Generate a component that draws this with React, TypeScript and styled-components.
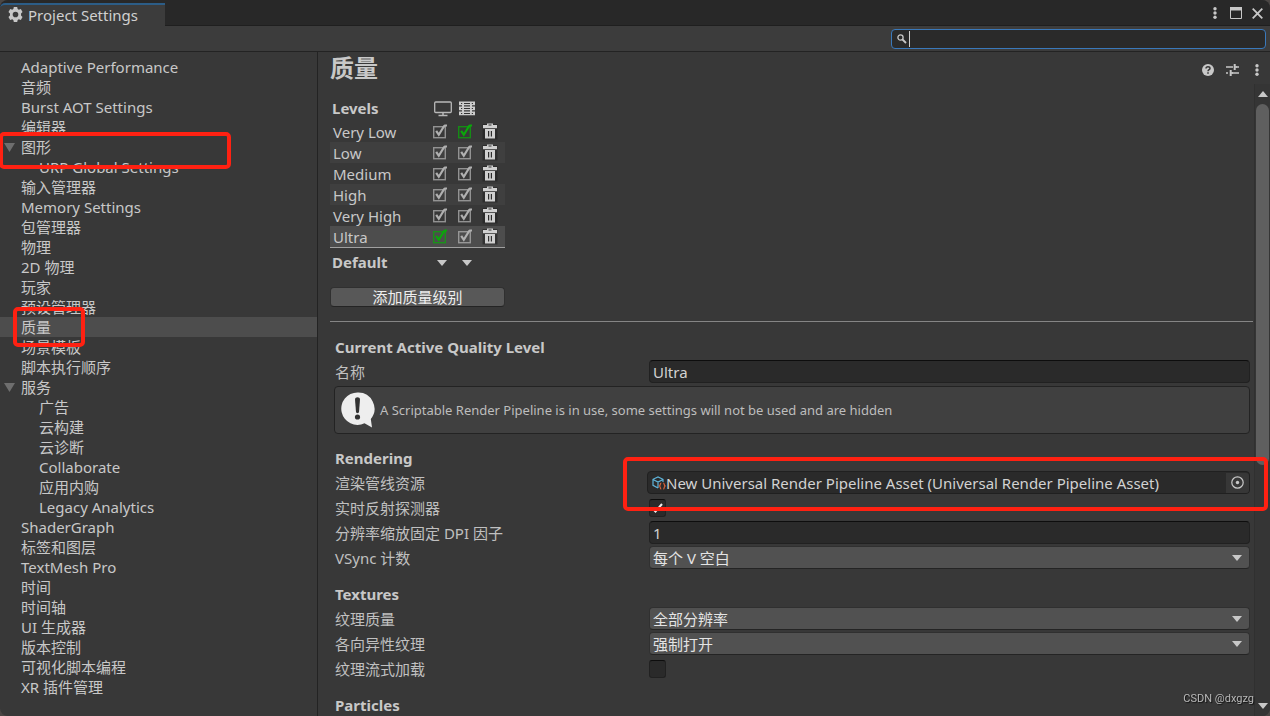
import React, { useState } from 'react';
import styled, { createGlobalStyle } from 'styled-components';

const GlobalStyle = createGlobalStyle`
  * { box-sizing: border-box; }
  html, body, #root { height: 100%; }
  body {
    margin: 0;
    overflow: hidden;
    background: #4a4644;
    color: #c8c8c8;
    font-family: "Noto Sans", "Noto Sans CJK SC", sans-serif;
    font-size: 15px;
    line-height: 20px;
  }
  button, input, select { font: inherit; color: inherit; margin: 0; }
  svg { display: block; }
`;

const Window = styled.div`
  display: flex;
  flex-direction: column;
  height: 100%;
  overflow: hidden;
  background: #383838;
  border-radius: 8px;
`;

const TitleBar = styled.header`
  display: flex;
  justify-content: space-between;
  height: 26px;
  padding-top: 3px;
  background: #282828;
  box-shadow: inset 0 -1px #1f1f1f;
`;

const Tab = styled.button`
  display: flex;
  align-items: center;
  gap: 5px;
  padding: 0 27px 2px 8px;
  border: 0;
  border-top: 2px solid #2c5d87;
  border-radius: 5px 0 0 0;
  background: #3c3c3c;
  line-height: 20px;
  color: #d0d0d0;
`;

const WindowButtons = styled.div`
  display: flex;
  align-items: center;
  padding: 0 4px 3px 0;
`;

const IconButton = styled.button<{ $width: number }>`
  display: grid;
  place-items: center;
  width: ${(p) => p.$width}px;
  height: 20px;
  padding: 0;
  border: 0;
  background: none;
  color: #c8c8c8;
`;

const Toolbar = styled.div`
  display: flex;
  justify-content: flex-end;
  align-items: center;
  height: 26px;
  padding: 0 4px 0 0;
  background: #3c3c3c;
  border-bottom: 1px solid #232323;
`;

const SearchBox = styled.label`
  display: flex;
  align-items: center;
  width: 375px;
  height: 20px;
  padding-left: 5px;
  border: 1px solid #3a79bb;
  border-radius: 4px;
  background: #2a2a2a;
`;

const Caret = styled.span`
  width: 1px;
  height: 16px;
  margin-left: 2px;
  background: #d0d0d0;
`;

const SearchInput = styled.input`
  flex: 1;
  min-width: 0;
  height: 16px;
  padding: 0;
  border: 0;
  outline: 0;
  background: none;
`;

const Body = styled.div`
  display: flex;
  flex: 1;
  min-height: 0;
`;

const Sidebar = styled.nav`
  flex: none;
  width: 318px;
  padding-top: 5px;
  border-right: 1px solid #232323;
`;

const Tree = styled.ul`
  margin: 0;
  padding: 0;
  list-style: none;
`;

const TreeItem = styled.li`
  position: relative;
`;

const TreeLink = styled.a<{ $level: number; $selected?: boolean }>`
  display: flex;
  align-items: center;
  height: 20px;
  padding-left: ${(p) => (p.$level ? 39 : 4)}px;
  background: ${(p) => (p.$selected ? '#4d4d4d' : 'transparent')};
  color: #c8c8c8;
  text-decoration: none;
  white-space: nowrap;
`;

const FoldSlot = styled.span`
  width: 17px;
`;

const Mark = styled.span<{ $top: number; $left: number; $width?: number; $right?: number; $height: number }>`
  position: absolute;
  z-index: 2;
  top: ${(p) => p.$top}px;
  left: ${(p) => p.$left}px;
  right: ${(p) => (p.$right === undefined ? 'auto' : `${p.$right}px`)};
  width: ${(p) => (p.$width ? `${p.$width}px` : 'auto')};
  height: ${(p) => p.$height}px;
  border: 4px solid #ff2112;
  border-radius: 5px;
  pointer-events: none;
`;

const Main = styled.main`
  display: flex;
  flex-direction: column;
  flex: 1;
  min-width: 0;
`;

const PageHeader = styled.div`
  display: flex;
  flex: none;
  justify-content: space-between;
  align-items: center;
  height: 32px;
  padding-left: 12px;
`;

const PageTitle = styled.h1`
  margin: 0;
  font-size: 24px;
  line-height: 32px;
  font-weight: 700;
`;

const HeaderButtons = styled.div`
  display: flex;
  padding-top: 4px;
`;

const ScrollArea = styled.div`
  display: flex;
  flex: 1;
  min-height: 0;
`;

const Content = styled.div`
  flex: 1;
  min-width: 0;
  padding: 14px 1px 0 12px;
`;

const LevelTable = styled.table`
  width: 175px;
  border-collapse: collapse;
  table-layout: fixed;
`;

const NameCol = styled.col`
  width: 98px;
`;

const CheckCol = styled.col`
  width: 25px;
`;

const HeadCell = styled.th<{ $icon?: boolean }>`
  height: 23px;
  padding: ${(p) => (p.$icon ? '0 0 2px 6px' : '0 0 3px 2px')};
  text-align: left;
  line-height: 20px;
`;

const LevelRow = styled.tr<{ $tone: 'plain' | 'striped' | 'selected' }>`
  background: ${(p) => ({ plain: 'transparent', striped: '#3f3f3f', selected: '#4d4d4d' })[p.$tone]};
  box-shadow: ${(p) => (p.$tone === 'selected' ? '0 1px #a0a0a0' : 'none')};
`;

const LevelName = styled.th`
  height: 21px;
  padding: 0 0 0 3px;
  font-weight: 400;
  text-align: left;
  line-height: 20px;
`;

const LevelCell = styled.td`
  height: 21px;
  padding: 0 0 1px 4px;
`;

const DefaultCell = styled.td`
  height: 30px;
  padding: 1px 0 0 4px;
`;

const DefaultName = styled.th`
  height: 30px;
  padding: 0 0 0 2px;
  text-align: left;
`;

const CheckStack = styled.label<{ $active?: boolean }>`
  display: grid;
  width: 16px;
  height: 15px;
  color: ${(p) => (p.$active ? '#0aa80a' : '#b0b0b0')};
  > * { grid-area: 1 / 1; pointer-events: none; }
`;

const BareCheck = styled.input`
  appearance: none;
  width: 100%;
  height: 100%;
  && { pointer-events: auto; }
`;

const AddButton = styled.button`
  display: block;
  width: 175px;
  height: 20px;
  margin: 10px 0 14px;
  padding: 0;
  border: 1px solid #303030;
  border-bottom-color: #242424;
  border-radius: 4px;
  background: #585858;
  line-height: 18px;
  color: #eeeeee;
`;

const Rule = styled.hr`
  height: 1px;
  margin: 0 0 13px;
  border: 0;
  background: #858585;
`;

const Section = styled.section`
  margin: 0 3px 12px 5px;
`;

const SectionTitle = styled.h2`
  margin: 0;
  font-size: 15px;
  line-height: 24px;
  font-weight: 700;
`;

const FieldRow = styled.div`
  display: grid;
  grid-template-columns: 314px minmax(0, 1fr);
  align-items: center;
  height: 25px;
`;

const FieldLabel = styled.label`
  color: #c0c0c0;
`;

const TextField = styled.input`
  width: 100%;
  height: 23px;
  padding: 0 3px;
  border: 1px solid #212121;
  border-top-color: #0d0d0d;
  border-radius: 4px;
  outline: 0;
  background: #2a2a2a;
  color: #d2d2d2;
`;

const SelectWrap = styled.div`
  display: grid;
  align-items: center;
  > * { grid-area: 1 / 1; }
  > svg { justify-self: end; margin-right: 8px; pointer-events: none; }
`;

const Dropdown = styled.select`
  appearance: none;
  width: 100%;
  height: 23px;
  padding: 0 24px 0 3px;
  border: 1px solid #303030;
  border-bottom-color: #242424;
  border-radius: 4px;
  outline: 0;
  background: #515151;
  color: #e4e4e4;
`;

const ObjectField = styled.div`
  position: relative;
  display: flex;
  align-items: center;
  height: 23px;
  margin-left: -2px;
  padding-left: 4px;
  border: 1px solid #202020;
  border-radius: 4px;
  background: #2a2a2a;
  color: #d2d2d2;
`;

const ObjectName = styled.span`
  flex: 1;
  overflow: hidden;
  white-space: nowrap;
`;

const PickerButton = styled.button`
  display: grid;
  place-items: center;
  width: 23px;
  height: 20px;
  padding: 0;
  border: 0;
  border-radius: 0 3px 3px 0;
  background: #373737;
  color: #c8c8c8;
`;

const ToggleBox = styled.span`
  display: grid;
  place-items: center;
  width: 17px;
  height: 18px;
  border: 1px solid #212121;
  border-top-color: #0d0d0d;
  border-radius: 3px;
  background: #2a2a2a;
  > * { grid-area: 1 / 1; }
  > svg { pointer-events: none; }
`;

const HelpBox = styled.div`
  display: flex;
  align-items: center;
  gap: 5px;
  height: 48px;
  margin: 2px 0 0 -1px;
  padding: 0 6px;
  border: 1px solid #232323;
  border-radius: 4px;
  background: #404040;
  color: #bdbdbd;
  font-size: 13px;
`;

const Scrollbar = styled.div`
  display: flex;
  flex-direction: column;
  flex: none;
  width: 16px;
  padding: 0 1px;
  border-left: 1px solid #303030;
  background: #353535;
`;

const Track = styled.div`
  flex: 1;
`;

const Thumb = styled.div`
  height: 61%;
  border-radius: 7px;
  background: #5f5f5f;
`;

const Watermark = styled.span`
  position: fixed;
  right: 16px;
  bottom: 9px;
  font-family: "Roboto", sans-serif;
  font-size: 11px;
  line-height: 16px;
  color: #b8b8b8;
  text-shadow: 1px 1px 1px #111111;
`;

const Dots = () => (
  <svg width="4" height="12" viewBox="0 0 4 12" fill="currentColor" aria-hidden="true">
    <circle cx="2" cy="1.7" r="1.7" /><circle cx="2" cy="6" r="1.7" /><circle cx="2" cy="10.3" r="1.7" />
  </svg>
);

const Arrow = ({ width = 10, height = 6, up = false, color = '#c8c8c8' }) => (
  <svg width={width} height={height} viewBox="0 0 10 6" preserveAspectRatio="none" fill={color} aria-hidden="true">
    <path d={up ? 'M0 6 5 0l5 6z' : 'M0 0h10L5 6z'} />
  </svg>
);

const Gear = () => (
  <svg width="15" height="15" viewBox="0 0 16 16" fill="#c8c8c8" aria-hidden="true">
    <path fillRule="evenodd" d="M6.2 0h3.6l.5 2.2 1.2.7 2.2-.7 1.8 3.2-1.6 1.5v2.2l1.6 1.5-1.8 3.2-2.2-.7-1.2.7-.5 2.2H6.2l-.5-2.2-1.2-.7-2.2.7L.5 10.600l1.600-1.500V6.900L.5 5.400l1.800-3.200 2.200.7 1.200-.7zM8 5a3 3 0 1 0 0 6 3 3 0 0 0 0-6z" />
  </svg>
);

const SearchIcon = () => (
  <svg width="10" height="10" viewBox="0 0 10 10" fill="none" stroke="#c8c8c8" aria-hidden="true">
    <circle cx="3.500" cy="3.500" r="2.600" strokeWidth="1.300" /><path d="M5.500 5.500 9 9" strokeWidth="1.800" />
  </svg>
);

const CheckIcon = ({ checked }: { checked: boolean }) => (
  <svg width="16" height="15" viewBox="0 0 16 15" fill="none" stroke="currentColor" aria-hidden="true">
    <rect x="1.700" y="2.700" width="11.600" height="11" strokeWidth="1.400" opacity=".75" />
    {checked && <path d="M4.200 6.800 6.800 10.800 12 2.200 13 1.500h2" strokeWidth="2.200" />}
  </svg>
);

const Trash = () => (
  <svg width="16" height="17" viewBox="0 0 16 17" aria-hidden="true">
    <path d="M.5 1h15v15.500H.5z" fill="#222222" opacity=".6" />
    <path d="M5 .5h6V2h4v3.200H1V2h4z" fill="#d0d0d0" />
    <path d="M6.500 1.500h3V2.500h-3z" fill="#333333" />
    <path fillRule="evenodd" d="M3 6h10v9.500H3zM6 8v5.500h1.200V8zm2.800 0v5.500H10V8z" fill="#d0d0d0" />
  </svg>
);

const Monitor = () => (
  <svg width="18" height="16" viewBox="0 0 18 16" fill="none" stroke="#b8b8b8" aria-hidden="true">
    <rect x=".7" y="1" width="16.600" height="10.500" rx="1" strokeWidth="1.300" />
    <path d="M9 11.500v3M4.500 14.500h9" strokeWidth="1.500" />
  </svg>
);

const Server = () => (
  <svg width="16" height="15" viewBox="0 0 16 15" aria-hidden="true">
    <path d="M0 .5h16v3.800H0zM0 5.500h16v3.800H0zM0 10.500h16v3.800H0zM3 4h2v7H3zM11 4h2v7h-2z" fill="#cccccc" />
    <path d="M2 1.900h1.200v1H2zM5 1.900h6v1H5zM12.800 1.900H14v1h-1.200zM2 6.900h1.200v1H2zM5 6.900h6v1H5zM12.800 6.900H14v1h-1.200zM2 11.900h1.200v1H2zM5 11.900h6v1H5zM12.800 11.900H14v1h-1.200z" fill="#333333" />
  </svg>
);

const Presets = () => (
  <svg width="13" height="12" viewBox="0 0 13 12" fill="none" stroke="currentColor" aria-hidden="true">
    <path d="M0 3h7M10 3h3M0 9h2M6 9h7" strokeWidth="1.300" />
    <path d="M8.700 0v6M4.700 6v6" strokeWidth="2" />
    <path d="M8.700 3H11M4.700 9H7" strokeWidth="1.600" />
  </svg>
);

const Question = () => (
  <svg width="12" height="12" viewBox="0 0 12 12" aria-hidden="true">
    <circle cx="6" cy="6" r="6" fill="currentColor" />
    <path d="M4 4.600C4 3.400 4.900 2.700 6 2.700s2 .7 2 1.700c0 1.300-2 1.300-2 2.900" fill="none" stroke="#383838" strokeWidth="1.500" />
    <path d="M5.200 8.300h1.600v1.500H5.200z" fill="#383838" />
  </svg>
);

const Maximize = () => (
  <svg width="12" height="12" viewBox="0 0 12 12" aria-hidden="true">
    <path d="M.5.5h11v11H.5z" fill="none" stroke="currentColor" /><path d="M0 0h12v3.500H0z" fill="currentColor" />
  </svg>
);

const Close = () => (
  <svg width="11" height="11" viewBox="0 0 11 11" fill="none" stroke="currentColor" strokeWidth="1.800" aria-hidden="true">
    <path d="M.7.7l9.600 9.600M10.300.7.7 10.300" />
  </svg>
);

const Bubble = () => (
  <svg width="34" height="36" viewBox="0 0 34 36" aria-hidden="true">
    <path d="M16.500.5a16.200 16.200 0 1 0 7 30.800L31 35.500l-1.200-8.600A16.200 16.200 0 0 0 16.500.5z" fill="#eeeeee" />
    <path d="M14 7.500c0-3 5-3 5 0l-1 12.500c-.2 1.500-2.800 1.500-3 0z" fill="#333333" />
    <circle cx="16.500" cy="25" r="2.600" fill="#333333" />
  </svg>
);

const AssetIcon = () => (
  <svg width="14" height="14" viewBox="0 0 14 14" fill="none" aria-hidden="true">
    <path d="M11 6V3.300L6 1 1 3.300v6L6 12M1 3.500 6 6l5-2.500M6 6v6" stroke="#5fb3d9" strokeWidth="1.200" />
    <path d="M9.300 7c-1.500 0-.6 2.400-1.800 3 1.200.6.3 3 1.800 3M11.200 7c1.500 0 .6 2.400 1.800 3-1.200.6-.3 3-1.800 3" stroke="#d9623b" strokeWidth="1.200" />
  </svg>
);

const Picker = () => (
  <svg width="13" height="13" viewBox="0 0 13 13" aria-hidden="true">
    <circle cx="6.500" cy="6.500" r="5.700" fill="none" stroke="currentColor" strokeWidth="1.200" />
    <circle cx="6.500" cy="6.500" r="1.700" fill="currentColor" />
  </svg>
);

const Tick = () => (
  <svg width="11" height="10" viewBox="0 0 11 10" fill="none" stroke="#eeeeee" strokeWidth="2" aria-hidden="true">
    <path d="M1 6l2.500 2.500L10 1" />
  </svg>
);

type Node = { name: string; level?: number; fold?: boolean; selected?: boolean; mark?: 'wide' | 'narrow' };

const nodes: Node[] = [
  { name: 'Adaptive Performance' },
  { name: '音频' },
  { name: 'Burst AOT Settings' },
  { name: '编辑器' },
  { name: '图形', fold: true, mark: 'wide' },
  { name: 'URP Global Settings', level: 1 },
  { name: '输入管理器' },
  { name: 'Memory Settings' },
  { name: '包管理器' },
  { name: '物理' },
  { name: '2D 物理' },
  { name: '玩家' },
  { name: '预设管理器' },
  { name: '质量', selected: true, mark: 'narrow' },
  { name: '场景模板' },
  { name: '脚本执行顺序' },
  { name: '服务', fold: true },
  { name: '广告', level: 1 },
  { name: '云构建', level: 1 },
  { name: '云诊断', level: 1 },
  { name: 'Collaborate', level: 1 },
  { name: '应用内购', level: 1 },
  { name: 'Legacy Analytics', level: 1 },
  { name: 'ShaderGraph' },
  { name: '标签和图层' },
  { name: 'TextMesh Pro' },
  { name: '时间' },
  { name: '时间轴' },
  { name: 'UI 生成器' },
  { name: '版本控制' },
  { name: '可视化脚本编程' },
  { name: 'XR 插件管理' },
];

const levels = ['Very Low', 'Low', 'Medium', 'High', 'Very High', 'Ultra'];

function LevelCheck({ label, active }: { label: string; active?: boolean }) {
  const [checked, setChecked] = useState(true);
  return (
    <CheckStack $active={active}>
      <BareCheck type="checkbox" aria-label={label} checked={checked} onChange={() => setChecked(!checked)} />
      <CheckIcon checked={checked} />
    </CheckStack>
  );
}

function Toggle({ id, initial }: { id: string; initial: boolean }) {
  const [checked, setChecked] = useState(initial);
  return (
    <ToggleBox>
      <BareCheck id={id} type="checkbox" checked={checked} onChange={() => setChecked(!checked)} />
      {checked && <Tick />}
    </ToggleBox>
  );
}

function SelectRow({ id, label, value }: { id: string; label: string; value: string }) {
  return (
    <FieldRow>
      <FieldLabel htmlFor={id}>{label}</FieldLabel>
      <SelectWrap>
        <Dropdown id={id} defaultValue={value}>
          <option>{value}</option>
        </Dropdown>
        <Arrow />
      </SelectWrap>
    </FieldRow>
  );
}

export default function App() {
  return (
    <Window>
      <GlobalStyle />
      <TitleBar>
        <Tab><Gear />Project Settings</Tab>
        <WindowButtons>
          <IconButton $width={18} aria-label="Menu"><Dots /></IconButton>
          <IconButton $width={24} aria-label="Maximize"><Maximize /></IconButton>
          <IconButton $width={18} aria-label="Close"><Close /></IconButton>
        </WindowButtons>
      </TitleBar>
      <Toolbar>
        <SearchBox>
          <SearchIcon />
          <Caret />
          <SearchInput type="text" aria-label="Search" />
        </SearchBox>
      </Toolbar>
      <Body>
        <Sidebar>
          <Tree>
            {nodes.map((n) => (
              <TreeItem key={n.name}>
                <TreeLink href="#" $level={n.level ?? 0} $selected={n.selected}>
                  {!n.level && <FoldSlot>{n.fold && <Arrow width={11} height={9} color="#6e6e6e" />}</FoldSlot>}
                  {n.name}
                </TreeLink>
                {n.mark === 'wide' && <Mark $top={-5} $left={-1} $width={232} $height={37} />}
                {n.mark === 'narrow' && <Mark $top={-10} $left={13} $width={72} $height={40} />}
              </TreeItem>
            ))}
          </Tree>
        </Sidebar>
        <Main>
          <PageHeader>
            <PageTitle>质量</PageTitle>
            <HeaderButtons>
              <IconButton $width={24} aria-label="Help"><Question /></IconButton>
              <IconButton $width={24} aria-label="Presets"><Presets /></IconButton>
              <IconButton $width={26} aria-label="More"><Dots /></IconButton>
            </HeaderButtons>
          </PageHeader>
          <ScrollArea>
            <Content>
              <LevelTable>
                <colgroup><NameCol /><CheckCol /><CheckCol /><col /></colgroup>
                <thead>
                  <tr>
                    <HeadCell>Levels</HeadCell>
                    <HeadCell $icon aria-label="Desktop"><Monitor /></HeadCell>
                    <HeadCell $icon aria-label="Server"><Server /></HeadCell>
                    <HeadCell />
                  </tr>
                </thead>
                <tbody>
                  {levels.map((name, i) => (
                    <LevelRow key={name} $tone={name === 'Ultra' ? 'selected' : i % 2 ? 'striped' : 'plain'}>
                      <LevelName scope="row">{name}</LevelName>
                      <LevelCell><LevelCheck label={`${name} desktop`} active={i === 5} /></LevelCell>
                      <LevelCell><LevelCheck label={`${name} server`} active={i === 0} /></LevelCell>
                      <LevelCell><IconButton $width={16} aria-label={`Delete ${name}`}><Trash /></IconButton></LevelCell>
                    </LevelRow>
                  ))}
                </tbody>
                <tfoot>
                  <tr>
                    <DefaultName scope="row">Default</DefaultName>
                    <DefaultCell><IconButton $width={20} aria-label="Default desktop level"><Arrow /></IconButton></DefaultCell>
                    <DefaultCell><IconButton $width={20} aria-label="Default server level"><Arrow /></IconButton></DefaultCell>
                    <td />
                  </tr>
                </tfoot>
              </LevelTable>
              <AddButton>添加质量级别</AddButton>
              <Rule />
              <Section>
                <SectionTitle>Current Active Quality Level</SectionTitle>
                <FieldRow>
                  <FieldLabel htmlFor="name">名称</FieldLabel>
                  <TextField id="name" type="text" defaultValue="Ultra" />
                </FieldRow>
                <HelpBox>
                  <Bubble />
                  A Scriptable Render Pipeline is in use, some settings will not be used and are hidden
                </HelpBox>
              </Section>
              <Section>
                <SectionTitle>Rendering</SectionTitle>
                <FieldRow>
                  <FieldLabel as="span">渲染管线资源</FieldLabel>
                  <ObjectField>
                    <AssetIcon />
                    <ObjectName>New Universal Render Pipeline Asset (Universal Render Pipeline Asset)</ObjectName>
                    <PickerButton aria-label="Select asset"><Picker /></PickerButton>
                    <Mark $top={-15} $left={-25} $right={-19} $height={54} />
                  </ObjectField>
                </FieldRow>
                <FieldRow>
                  <FieldLabel htmlFor="probes">实时反射探测器</FieldLabel>
                  <Toggle id="probes" initial />
                </FieldRow>
                <FieldRow>
                  <FieldLabel htmlFor="dpi">分辨率缩放固定 DPI 因子</FieldLabel>
                  <TextField id="dpi" type="text" defaultValue="1" />
                </FieldRow>
                <SelectRow id="vsync" label="VSync 计数" value="每个 V 空白" />
              </Section>
              <Section>
                <SectionTitle>Textures</SectionTitle>
                <SelectRow id="texture" label="纹理质量" value="全部分辨率" />
                <SelectRow id="aniso" label="各向异性纹理" value="强制打开" />
                <FieldRow>
                  <FieldLabel htmlFor="streaming">纹理流式加载</FieldLabel>
                  <Toggle id="streaming" initial={false} />
                </FieldRow>
              </Section>
              <Section>
                <SectionTitle>Particles</SectionTitle>
              </Section>
            </Content>
            <Scrollbar>
              <IconButton $width={13} aria-label="Scroll up"><Arrow up /></IconButton>
              <Track><Thumb /></Track>
              <IconButton $width={13} aria-label="Scroll down"><Arrow /></IconButton>
            </Scrollbar>
          </ScrollArea>
        </Main>
      </Body>
      <Watermark>CSDN @dxgzg</Watermark>
    </Window>
  );
}
